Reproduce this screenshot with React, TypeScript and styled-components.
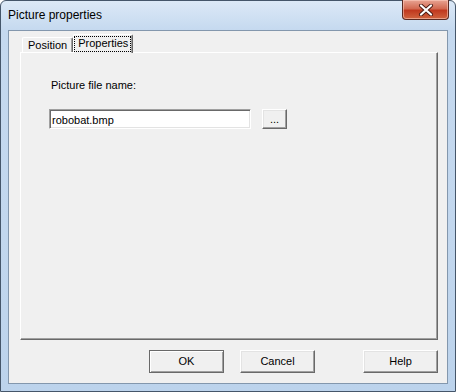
import React, { useState } from 'react';
import styled, { createGlobalStyle } from 'styled-components';

const GlobalStyle = createGlobalStyle`
  html, body {
    margin: 0;
    padding: 0;
    background: #ffffff;
  }
  * {
    box-sizing: border-box;
  }
`;

const Window = styled.div`
  width: 456px;
  height: 392px;
  border: 1px solid #45566a;
  border-radius: 6px 6px 0 0;
  background: linear-gradient(#dce9f7, #c5d9ef 29px, #c2d7ee 60%, #bcd3ec);
  display: flex;
  flex-direction: column;
  font-family: 'Liberation Sans', Arial, sans-serif;
`;

const TitleBar = styled.div`
  height: 29px;
  display: flex;
  align-items: flex-start;
  justify-content: space-between;
  padding-left: 7px;
`;

const Title = styled.span`
  font-family: 'Liberation Sans', Arial, sans-serif;
  font-size: 12px;
  line-height: 14px;
  margin-top: 7px;
  color: #000000;
`;

const CloseButton = styled.button`
  width: 47px;
  height: 20px;
  margin: -1px 6px 0 0;
  padding: 0;
  border: 1px solid #5a2a22;
  border-top: none;
  border-radius: 0 0 4px 4px;
  background: linear-gradient(#e8a493, #d26a52 45%, #c0391f 55%, #d0643f);
  box-shadow: inset 0 0 0 1px rgba(255, 210, 195, 0.55);
  display: flex;
  align-items: center;
  justify-content: center;
  cursor: pointer;
`;

const Frame = styled.div`
  flex: 1;
  display: flex;
  padding: 0 7px 7px 7px;
`;

const Client = styled.div`
  flex: 1;
  display: flex;
  flex-direction: column;
  background: #f0f0f0;
  border: 1px solid #8397ad;
  padding: 3px 9px 10px 11px;
  font-size: 11px;
  color: #000000;
`;

const TabArea = styled.div`
  flex: 1;
  display: flex;
  flex-direction: column;
`;

const TabStrip = styled.div`
  display: flex;
  align-items: flex-end;
  height: 18px;
  padding-left: 2px;
`;

const Tab = styled.div<{ $active?: boolean }>`
  height: ${p => (p.$active ? '19px' : '15px')};
  margin-bottom: ${p => (p.$active ? '-1px' : '0')};
  padding: ${p => (p.$active ? '2px 2px 0 1px' : '1px 5px 0 5px')};
  background: #f0f0f0;
  border-top: 1px solid #ffffff;
  border-left: 1px solid #ffffff;
  border-right: 1px solid #696969;
  border-radius: 2px 2px 0 0;
  box-shadow: inset -1px 0 0 #a0a0a0;
  position: relative;
  z-index: ${p => (p.$active ? 1 : 0)};
  line-height: 13px;
  white-space: nowrap;
`;

const FocusLabel = styled.span`
  display: inline-block;
  padding: 0 2px 1px 3px;
  outline: 1px dotted #000000;
  outline-offset: 0;
`;

const Panel = styled.div`
  flex: 1;
  margin-bottom: 10px;
  border-top: 1px solid #ffffff;
  border-left: 1px solid #ffffff;
  border-right: 1px solid #696969;
  border-bottom: 1px solid #696969;
  box-shadow: inset -1px -1px 0 #a0a0a0;
  padding: 26px 0 0 30px;
  display: flex;
  flex-direction: column;
  align-items: flex-start;
`;

const FieldLabel = styled.label`
  line-height: 13px;
  margin-bottom: 17px;
`;

const FieldRow = styled.div`
  display: flex;
  align-items: flex-start;
  gap: 11px;
  margin-left: -2px;
`;

const TextInput = styled.input`
  width: 202px;
  height: 20px;
  margin: 0;
  padding: 1px 2px 0;
  font-family: 'Liberation Sans', Arial, sans-serif;
  font-size: 11px;
  color: #000000;
  background: #ffffff;
  border-top: 1px solid #a0a0a0;
  border-left: 1px solid #a0a0a0;
  border-right: 1px solid #ffffff;
  border-bottom: 1px solid #ffffff;
  box-shadow: inset 1px 1px 0 #696969, inset -1px -1px 0 #e3e3e3;
  outline: none;
`;

const Button = styled.button<{ $default?: boolean; $width?: number }>`
  width: ${p => p.$width ?? 75}px;
  height: ${p => (p.$width ? 20 : 23)}px;
  margin: 0;
  padding: 0;
  font-family: 'Liberation Sans', Arial, sans-serif;
  font-size: 11px;
  color: #000000;
  background: #f0f0f0;
  border-top: 1px solid ${p => (p.$default ? '#696969' : '#ffffff')};
  border-left: 1px solid ${p => (p.$default ? '#696969' : '#ffffff')};
  border-right: 1px solid #696969;
  border-bottom: 1px solid #696969;
  box-shadow: ${p =>
    p.$default
      ? 'inset 1px 1px 0 #ffffff, inset -1px -1px 0 #a0a0a0'
      : 'inset -1px -1px 0 #a0a0a0, inset 1px 1px 0 #e3e3e3'};
  line-height: 13px;
  cursor: pointer;
`;

const ButtonRow = styled.div`
  display: flex;
  justify-content: flex-end;
  gap: 16px;
`;

const HelpButton = styled(Button)`
  margin-left: 32px;
`;

const CloseGlyph = () => (
  <svg width="16" height="12" viewBox="0 0 16 12">
    <path
      d="M3 1.5 L13 10.5 M13 1.5 L3 10.5"
      stroke="#4a1a12"
      strokeWidth="4"
      strokeLinecap="round"
    />
    <path
      d="M3 1.5 L13 10.5 M13 1.5 L3 10.5"
      stroke="#ffffff"
      strokeWidth="2.2"
      strokeLinecap="round"
    />
  </svg>
);

const App: React.FC = () => {
  const [fileName, setFileName] = useState('robobat.bmp');

  return (
    <>
      <GlobalStyle />
      <Window>
        <TitleBar>
          <Title>Picture properties</Title>
          <CloseButton aria-label="Close">
            <CloseGlyph />
          </CloseButton>
        </TitleBar>
        <Frame>
          <Client>
            <TabArea>
              <TabStrip>
                <Tab>Position</Tab>
                <Tab $active>
                  <FocusLabel>Properties</FocusLabel>
                </Tab>
              </TabStrip>
              <Panel>
                <FieldLabel htmlFor="picFile">Picture file name:</FieldLabel>
                <FieldRow>
                  <TextInput
                    id="picFile"
                    value={fileName}
                    onChange={e => setFileName(e.target.value)}
                  />
                  <Button $width={25}>...</Button>
                </FieldRow>
              </Panel>
            </TabArea>
            <ButtonRow>
              <Button $default>OK</Button>
              <Button>Cancel</Button>
              <HelpButton>Help</HelpButton>
            </ButtonRow>
          </Client>
        </Frame>
      </Window>
    </>
  );
};

export default App;
